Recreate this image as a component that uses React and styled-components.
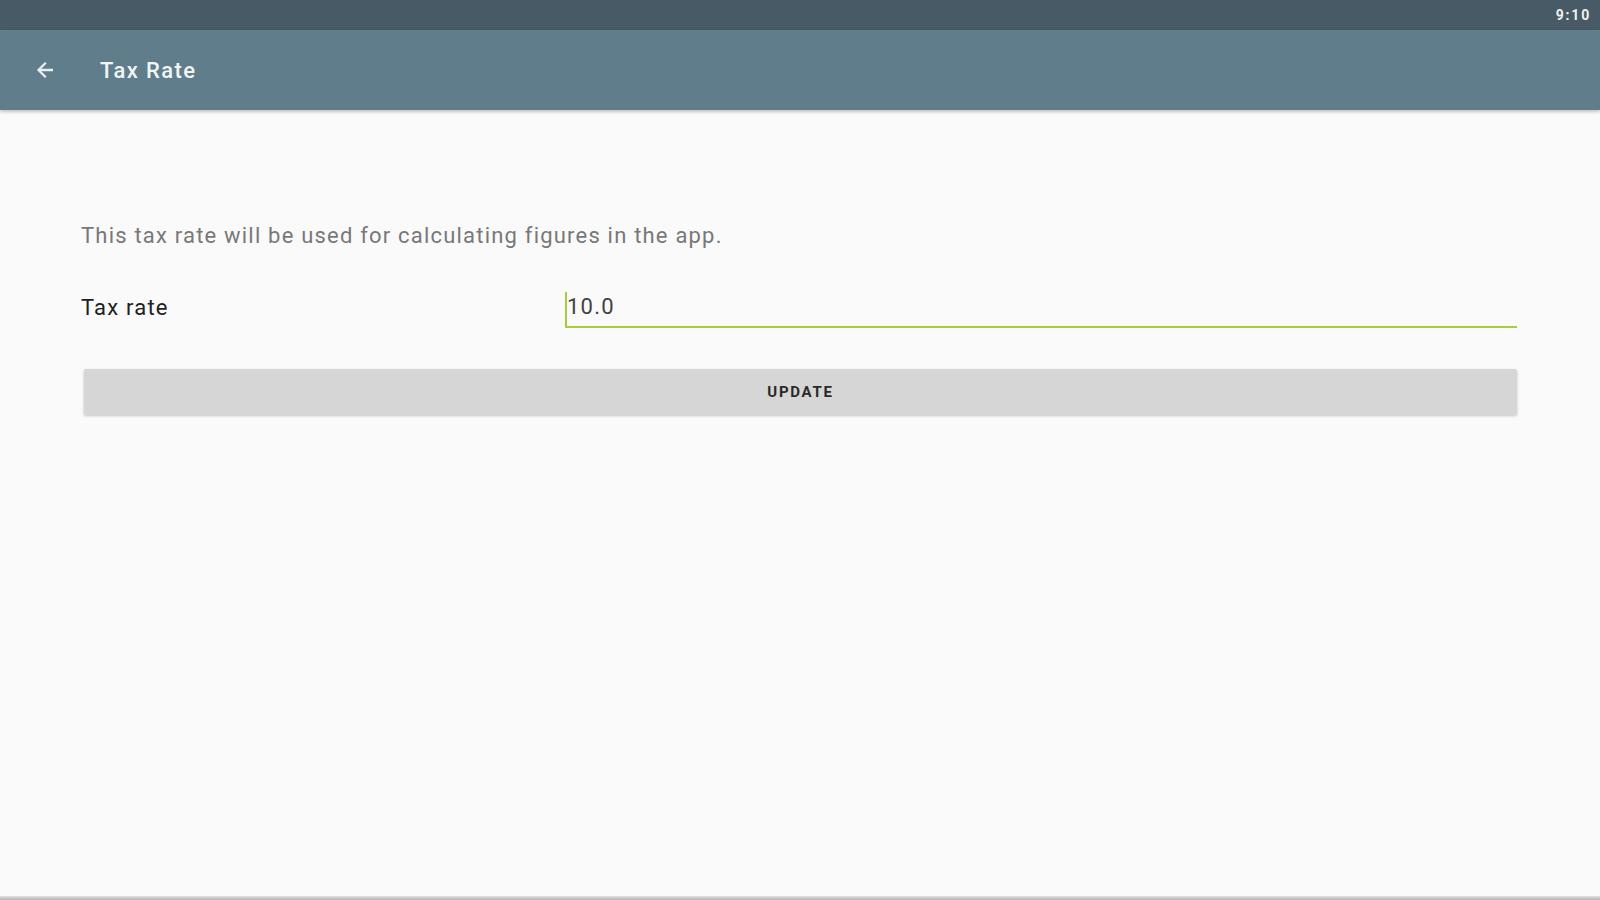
import React from "react";
import styled, { createGlobalStyle } from "styled-components";

const GlobalStyle = createGlobalStyle`
  html, body {
    margin: 0;
    padding: 0;
    background: #fafafa;
  }
  body {
    font-family: Roboto, "Noto Sans", "Liberation Sans", sans-serif;
  }
`;

const Screen = styled.div`
  display: flex;
  flex-direction: column;
  height: 100vh;
  overflow: hidden;
  background: #fafafa;
`;

const StatusBar = styled.div`
  height: 30px;
  background: #475a65;
  display: flex;
  align-items: center;
  justify-content: flex-end;
  padding-right: 9px;
`;

const Clock = styled.span`
  color: #eef2f4;
  font-size: 14px;
  font-weight: 700;
  letter-spacing: 1.8px;
`;

const Toolbar = styled.header`
  height: 80px;
  background: #607d8b;
  display: flex;
  align-items: center;
  padding-left: 33px;
  box-shadow: 0 2px 3px rgba(0, 0, 0, 0.22);
  position: relative;
  z-index: 1;
`;

const BackButton = styled.button`
  width: 24px;
  height: 24px;
  padding: 0;
  border: none;
  background: none;
  display: flex;
  align-items: center;
  justify-content: center;
  margin-right: 43px;
`;

const Title = styled.h1`
  margin: 0;
  color: #f2f5f6;
  font-size: 22px;
  font-weight: 500;
  letter-spacing: 1.4px;
`;

const Content = styled.main`
  flex: 1;
  padding: 112px 83px 0 81px;
`;

const Description = styled.p`
  margin: 0 0 34px;
  color: #787878;
  font-size: 22px;
  line-height: 28px;
  letter-spacing: 1.2px;
`;

const FieldRow = styled.div`
  display: grid;
  grid-template-columns: 484px 1fr;
  align-items: center;
  height: 44px;
`;

const Label = styled.span`
  color: #212121;
  font-size: 22px;
  letter-spacing: 1.2px;
  padding-top: 2px;
`;

const Field = styled.div`
  height: 42px;
  display: flex;
  align-items: flex-end;
  border-bottom: 2px solid #a8cc3a;
`;

const Cursor = styled.span`
  width: 2px;
  height: 34px;
  background: #a8cc3a;
`;

const Value = styled.span`
  align-self: center;
  color: #424242;
  font-size: 22px;
  letter-spacing: 1.2px;
  padding-top: 2px;
`;

const UpdateButton = styled.button`
  display: block;
  width: calc(100% - 3px);
  height: 46px;
  margin: 41px 0 0 3px;
  border: none;
  border-radius: 2px;
  background: #d6d6d6;
  box-shadow: 0 1px 3px rgba(0, 0, 0, 0.22);
  color: #2a2a2a;
  font-family: Roboto, "Noto Sans", sans-serif;
  font-size: 15px;
  font-weight: 700;
  letter-spacing: 1.7px;
`;

const BottomEdge = styled.div`
  height: 4px;
  background: linear-gradient(#e0e0e0, #b4b4b4);
`;

const BackArrow = () => (
  <svg width="24" height="24" viewBox="0 0 24 24" fill="#e9eef0">
    <path d="M20 10.8H8.3l5.3-5.3L12 3.9 3.9 12l8.1 8.1 1.6-1.6-5.3-5.3H20v-2.4z" />
  </svg>
);

export default function App() {
  return (
    <Screen>
      <GlobalStyle />
      <StatusBar>
        <Clock>9:10</Clock>
      </StatusBar>
      <Toolbar>
        <BackButton aria-label="Back">
          <BackArrow />
        </BackButton>
        <Title>Tax Rate</Title>
      </Toolbar>
      <Content>
        <Description>
          This tax rate will be used for calculating figures in the app.
        </Description>
        <FieldRow>
          <Label>Tax rate</Label>
          <Field>
            <Cursor />
            <Value>10.0</Value>
          </Field>
        </FieldRow>
        <UpdateButton>UPDATE</UpdateButton>
      </Content>
      <BottomEdge />
    </Screen>
  );
}
